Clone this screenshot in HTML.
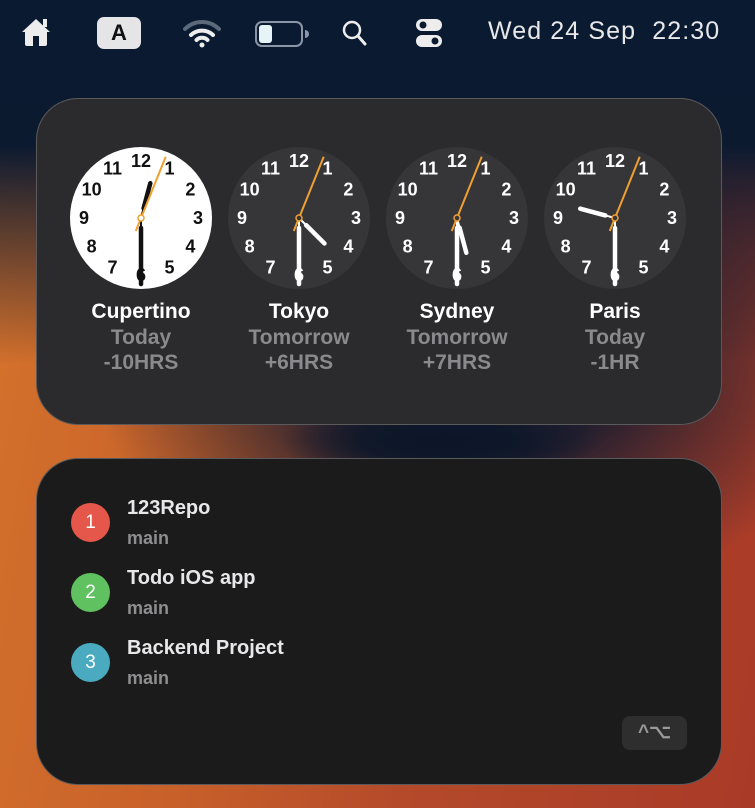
<!DOCTYPE html><html><head><meta charset="utf-8"><style>
*{margin:0;padding:0;box-sizing:border-box}
body{width:755px;height:808px;overflow:hidden;position:relative;font-family:"Liberation Sans",sans-serif;
background:
radial-gradient(ellipse 160px 40px at 440px 442px,#0b1628 0%,rgba(11,22,40,.8) 50%,rgba(11,22,40,0) 100%),
radial-gradient(ellipse 380px 260px at 470px 360px,#0b1830 0%,rgba(11,24,48,.85) 40%,rgba(11,24,48,0) 100%),
linear-gradient(180deg,#0a1a30 0%,#0c1a30 18%,rgba(12,26,48,0) 45%),
linear-gradient(100deg,#d5742c 0%,#c8602a 35%,#b44a2a 60%,#a93a28 100%);}
.p{position:absolute;left:36px;width:686px;border-radius:42px;border:1.5px solid #5a5a5c}
.s{position:absolute;text-align:center;width:158px}
.c{color:#fff;font-weight:bold;font-size:21px;line-height:26px}
.g{color:#8a8a8e;font-weight:bold;font-size:21px;line-height:25px}
.mb{position:absolute;color:#e8e8ea}
.row{position:absolute;left:71px}
.dot{position:absolute;left:0;width:39px;height:39px;border-radius:50%;color:#fff;font-size:19px;text-align:center;line-height:39px}
.t{position:absolute;left:56px;top:-6px;color:#e8e8ea;font-weight:bold;font-size:20px;white-space:nowrap}
.m{position:absolute;left:56px;top:25px;color:#8e8e90;font-size:18px;font-weight:bold}
</style></head><body>
<svg class="mb" style="left:18px;top:14px" width="40" height="36" viewBox="0 0 40 36"><path d="M4 18 L18 5 L32 18 Z" fill="#ededed"/><rect x="7" y="16" width="22" height="16" rx="2" fill="#ededed"/><rect x="15" y="22" width="6" height="10" fill="#0a1a30"/><rect x="25" y="5" width="4" height="8" fill="#ededed"/></svg>
<div class="mb" style="left:97px;top:17px;width:44px;height:32px;background:#e5e5e7;border-radius:7px;color:#111;font-weight:bold;font-size:22px;text-align:center;line-height:32px">A</div>
<svg class="mb" style="left:183px;top:18px" width="38" height="30" viewBox="0 0 38 30"><path d="M2 11 A24 24 0 0 1 36 11" stroke="#5a6a7a" stroke-width="4" fill="none" stroke-linecap="round"/><path d="M8 17 A16 16 0 0 1 30 17" stroke="#ededed" stroke-width="4" fill="none" stroke-linecap="round"/><path d="M13.5 22 A8 8 0 0 1 24.5 22" stroke="#ededed" stroke-width="4" fill="none" stroke-linecap="round"/><circle cx="19" cy="27" r="2.5" fill="#ededed"/></svg>
<svg class="mb" style="left:254px;top:20px" width="56" height="28" viewBox="0 0 56 28"><rect x="2" y="2" width="46" height="24" rx="6" stroke="#8a96a6" stroke-width="2" fill="none"/><rect x="5" y="5" width="13" height="18" rx="3" fill="#e6f4f8"/><path d="M51 10 v8 a3 3 0 0 0 0-8z" fill="#8a96a6"/></svg>
<svg class="mb" style="left:340px;top:19px" width="30" height="28" viewBox="0 0 30 28"><circle cx="12" cy="11" r="8" stroke="#ededed" stroke-width="2.5" fill="none"/><path d="M18 17 L25 25" stroke="#ededed" stroke-width="3" stroke-linecap="round"/></svg>
<svg class="mb" style="left:414px;top:17px" width="32" height="32" viewBox="0 0 32 32"><rect x="2" y="2" width="26" height="12" rx="6" fill="#ededed"/><circle cx="9" cy="8" r="3.5" fill="#0a1a30"/><rect x="2" y="18" width="26" height="12" rx="6" fill="#ededed"/><circle cx="21" cy="24" r="3.5" fill="#0a1a30"/></svg>
<div class="mb" style="left:488px;top:17px;font-size:25px;letter-spacing:1.1px;white-space:pre">Wed 24 Sep  22:30</div>

<div class="p" style="top:98px;height:327px;background:#2b2b2d"></div>
<svg style="position:absolute;left:0;top:0" width="755" height="430" font-family="Liberation Sans,sans-serif" font-weight="bold" font-size="18" text-anchor="middle" dominant-baseline="central">
<g transform="translate(141,218)" fill="#111"><circle r="71" fill="#fff"/>
<text x="0" y="-57">12</text><text x="28.5" y="-49.4">1</text><text x="49.4" y="-28.5">2</text><text x="57" y="0">3</text><text x="49.4" y="28.5">4</text><text x="28.5" y="49.4">5</text><text x="0" y="57">6</text><text x="-28.5" y="49.4">7</text><text x="-49.4" y="28.5">8</text><text x="-57" y="0">9</text><text x="-49.4" y="-28.5">10</text><text x="-28.5" y="-49.4">11</text>
<g stroke="#111" stroke-linecap="round"><g transform="rotate(15)"><line y2="-10" stroke-width="2"/><line y1="-10" y2="-36" stroke-width="4.5"/></g><g transform="rotate(180)"><line y2="-10" stroke-width="2"/><line y1="-10" y2="-66" stroke-width="4.5"/></g></g>
<line y1="14" y2="-66" stroke="#f0a030" stroke-width="2" transform="rotate(22)"/><circle r="3" fill="#fff" stroke="#f0a030" stroke-width="1.5"/></g>
<g transform="translate(299,218)" fill="#fff"><circle r="71" fill="#363638"/>
<text x="0" y="-57">12</text><text x="28.5" y="-49.4">1</text><text x="49.4" y="-28.5">2</text><text x="57" y="0">3</text><text x="49.4" y="28.5">4</text><text x="28.5" y="49.4">5</text><text x="0" y="57">6</text><text x="-28.5" y="49.4">7</text><text x="-49.4" y="28.5">8</text><text x="-57" y="0">9</text><text x="-49.4" y="-28.5">10</text><text x="-28.5" y="-49.4">11</text>
<g stroke="#fff" stroke-linecap="round"><g transform="rotate(135)"><line y2="-10" stroke-width="2"/><line y1="-10" y2="-36" stroke-width="4.5"/></g><g transform="rotate(180)"><line y2="-10" stroke-width="2"/><line y1="-10" y2="-66" stroke-width="4.5"/></g></g>
<line y1="14" y2="-66" stroke="#f0a030" stroke-width="2" transform="rotate(22)"/><circle r="3" fill="#363638" stroke="#f0a030" stroke-width="1.5"/></g>
<g transform="translate(457,218)" fill="#fff"><circle r="71" fill="#363638"/>
<text x="0" y="-57">12</text><text x="28.5" y="-49.4">1</text><text x="49.4" y="-28.5">2</text><text x="57" y="0">3</text><text x="49.4" y="28.5">4</text><text x="28.5" y="49.4">5</text><text x="0" y="57">6</text><text x="-28.5" y="49.4">7</text><text x="-49.4" y="28.5">8</text><text x="-57" y="0">9</text><text x="-49.4" y="-28.5">10</text><text x="-28.5" y="-49.4">11</text>
<g stroke="#fff" stroke-linecap="round"><g transform="rotate(165)"><line y2="-10" stroke-width="2"/><line y1="-10" y2="-36" stroke-width="4.5"/></g><g transform="rotate(180)"><line y2="-10" stroke-width="2"/><line y1="-10" y2="-66" stroke-width="4.5"/></g></g>
<line y1="14" y2="-66" stroke="#f0a030" stroke-width="2" transform="rotate(22)"/><circle r="3" fill="#363638" stroke="#f0a030" stroke-width="1.5"/></g>
<g transform="translate(615,218)" fill="#fff"><circle r="71" fill="#363638"/>
<text x="0" y="-57">12</text><text x="28.5" y="-49.4">1</text><text x="49.4" y="-28.5">2</text><text x="57" y="0">3</text><text x="49.4" y="28.5">4</text><text x="28.5" y="49.4">5</text><text x="0" y="57">6</text><text x="-28.5" y="49.4">7</text><text x="-49.4" y="28.5">8</text><text x="-57" y="0">9</text><text x="-49.4" y="-28.5">10</text><text x="-28.5" y="-49.4">11</text>
<g stroke="#fff" stroke-linecap="round"><g transform="rotate(285)"><line y2="-10" stroke-width="2"/><line y1="-10" y2="-36" stroke-width="4.5"/></g><g transform="rotate(180)"><line y2="-10" stroke-width="2"/><line y1="-10" y2="-66" stroke-width="4.5"/></g></g>
<line y1="14" y2="-66" stroke="#f0a030" stroke-width="2" transform="rotate(22)"/><circle r="3" fill="#363638" stroke="#f0a030" stroke-width="1.5"/></g>
</svg>
<div class="s" style="left:62px;top:299px"><div class="c">Cupertino</div><div class="g">Today<br>-10HRS</div></div>
<div class="s" style="left:220px;top:299px"><div class="c">Tokyo</div><div class="g">Tomorrow<br>+6HRS</div></div>
<div class="s" style="left:378px;top:299px"><div class="c">Sydney</div><div class="g">Tomorrow<br>+7HRS</div></div>
<div class="s" style="left:536px;top:299px"><div class="c">Paris</div><div class="g">Today<br>-1HR</div></div>

<div class="p" style="top:458px;height:327px;background:#1b1b1b"></div>
<div class="row" style="top:503px"><div class="dot" style="background:#e5574a">1</div><div class="t">123Repo</div><div class="m">main</div></div>
<div class="row" style="top:573px"><div class="dot" style="background:#5fc15f">2</div><div class="t">Todo iOS app</div><div class="m">main</div></div>
<div class="row" style="top:643px"><div class="dot" style="background:#4aabc0">3</div><div class="t">Backend Project</div><div class="m">main</div></div>
<div style="position:absolute;left:622px;top:716px;width:65px;height:34px;background:#2e2e2e;border-radius:8px;color:#9a9a9a;font-size:19px;font-weight:bold;text-align:center;line-height:34px">^⌥</div>
</body></html>
